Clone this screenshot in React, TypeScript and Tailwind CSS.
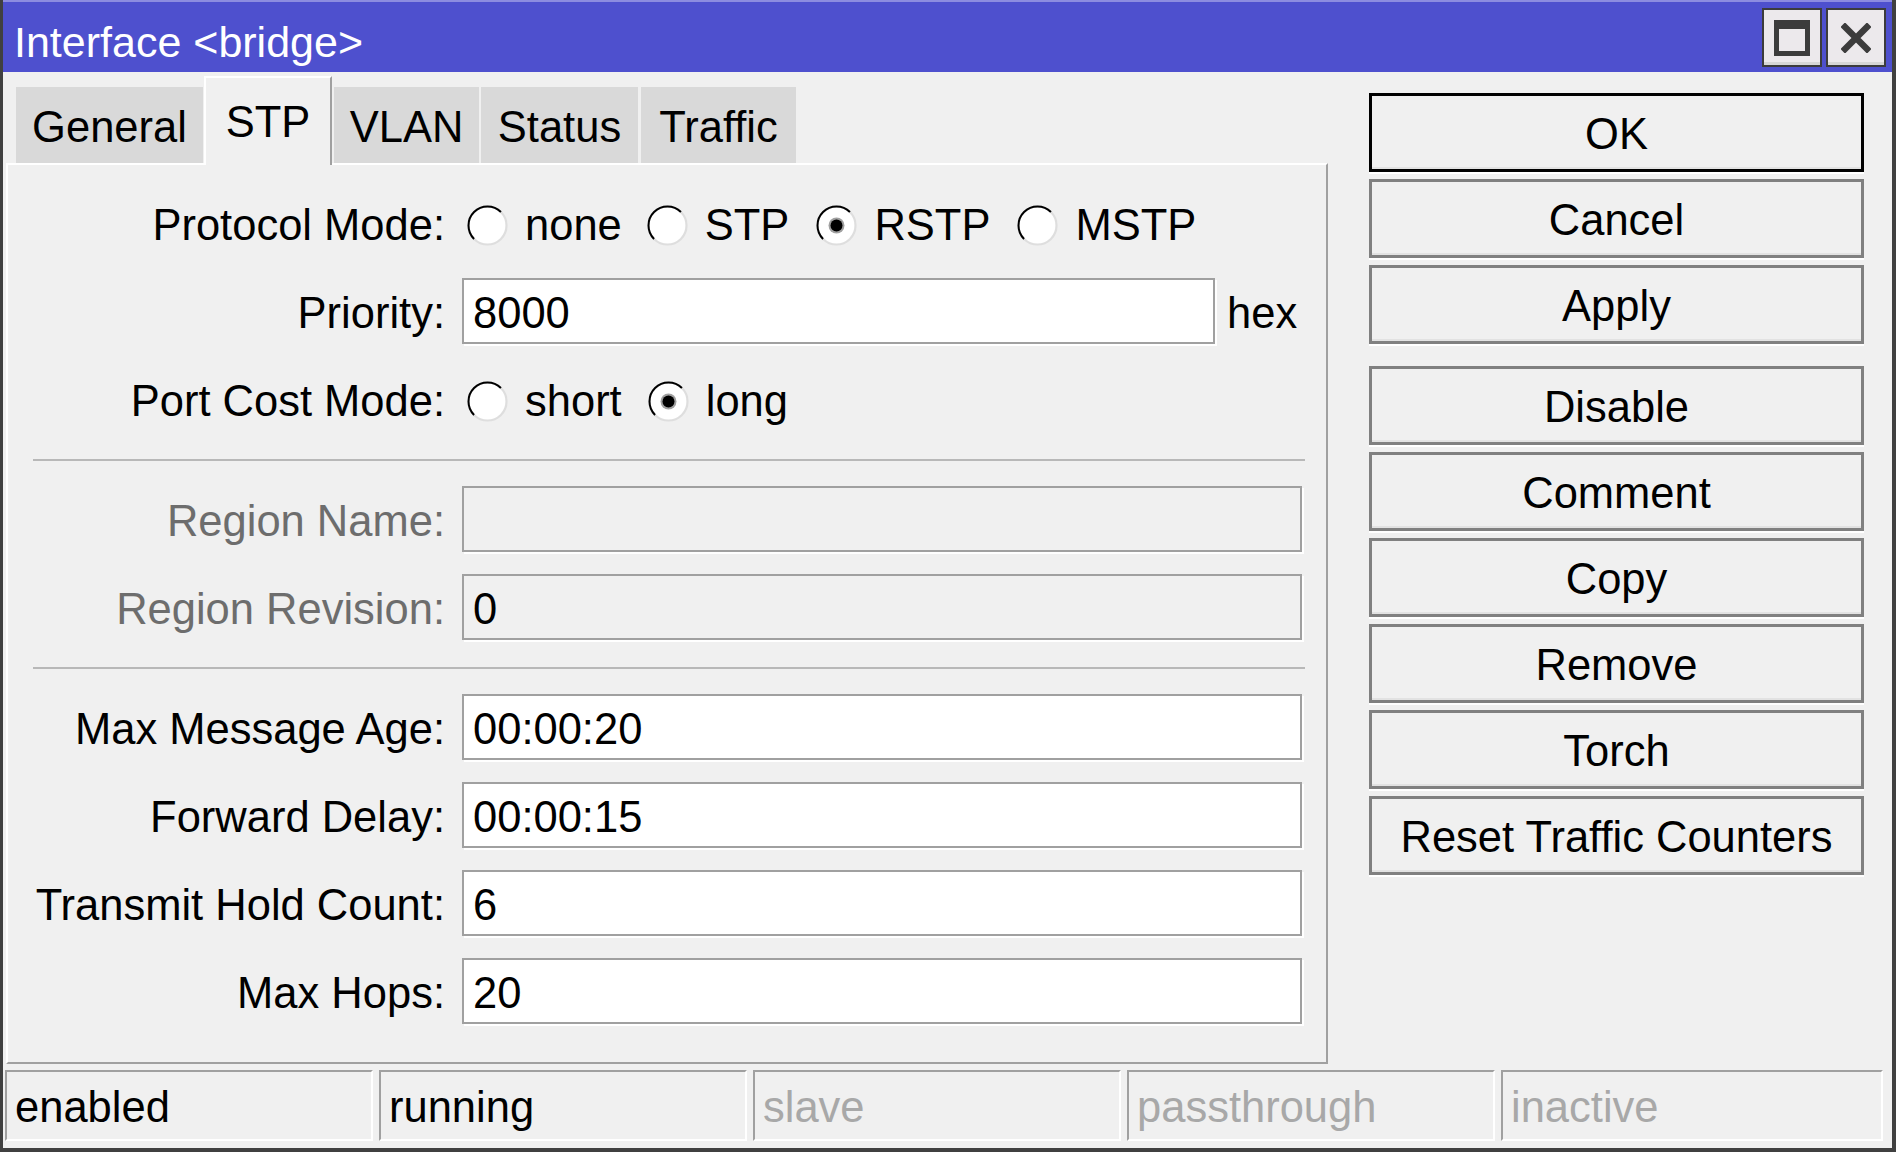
import React from "react";

function Radio({ checked }: { checked?: boolean }) {
  return (
    <svg width="41" height="41" viewBox="0 0 41 41" className="shrink-0">
      <circle cx="20.5" cy="20.5" r="19" fill="#ffffff" stroke="#dedede" strokeWidth="2.2" />
      <path d="M7.06 33.94 A19 19 0 0 1 33.94 7.06" fill="none" stroke="#000000" strokeWidth="2" />
      {checked && (
        <>
          <circle cx="20.5" cy="20.5" r="8" fill="#a0a0a0" />
          <circle cx="20.5" cy="20.5" r="6" fill="#000000" />
        </>
      )}
    </svg>
  );
}

function Option({ label, checked, className }: { label: string; checked?: boolean; className: string }) {
  return (
    <div className={`flex items-center pt-[5px] ${className}`}>
      <Radio checked={checked} />
      <span className="ml-[17px] whitespace-nowrap">{label}</span>
    </div>
  );
}

function Row({
  label,
  muted,
  children,
  className,
}: {
  label: string;
  muted?: boolean;
  children: React.ReactNode;
  className?: string;
}) {
  return (
    <div className={`flex items-center h-[66px] shrink-0 ${className ?? "mb-[22px]"}`}>
      <div className={`w-[437px] pt-[5px] text-right whitespace-nowrap ${muted ? "text-[#6d6d6d]" : "text-black"}`}>
        {label}
      </div>
      <div className="ml-[17px] flex items-center">{children}</div>
    </div>
  );
}

function Field({ value, wide = true, disabled }: { value: string; wide?: boolean; disabled?: boolean }) {
  return (
    <div
      className={`h-[66px] border-2 border-[#a0a0a0] shadow-[2px_2px_0_#ffffff] flex items-center pl-[9px] pt-[5px] whitespace-nowrap ${
        wide ? "w-[840px]" : "w-[753px]"
      } ${disabled ? "bg-[#f0f0f0]" : "bg-white"}`}
    >
      {value}
    </div>
  );
}

function Separator() {
  return <div className="ml-[25px] w-[1272px] h-[2px] bg-[#b8b8b8] mt-[5px] mb-[25px] shrink-0" />;
}

function Btn({ children, primary, className }: { children: React.ReactNode; primary?: boolean; className?: string }) {
  return (
    <div
      className={`h-[79px] shrink-0 border-[3px] flex items-center justify-center pt-[5px] bg-[#f0f0f0] whitespace-nowrap shadow-[0_2px_0_#ffffff,inset_0_-2px_0_#e2e2e2] ${
        primary ? "border-black" : "border-[#808080]"
      } ${className ?? "mb-[7px]"}`}
    >
      {children}
    </div>
  );
}

function Cell({ children, muted, last }: { children: React.ReactNode; muted?: boolean; last?: boolean }) {
  return (
    <div
      className={`h-[71px] border-2 border-t-[#a0a0a0] border-l-[#a0a0a0] border-b-white border-r-white flex items-center pl-[8px] pt-[4px] whitespace-nowrap ${
        last ? "flex-1" : "w-[368px]"
      } ${muted ? "text-[#a8a8a8]" : "text-black"}`}
    >
      {children}
    </div>
  );
}

export default function App() {
  return (
    <div className="w-[1896px] h-[1152px] overflow-hidden bg-[#f0f0f0] flex flex-col border-l-[3px] border-r-[4px] border-b-[4px] border-[#404040] text-[43.5px] leading-none text-black font-['Liberation_Sans',Arial,Helvetica,sans-serif]">
      {/* Title bar */}
      <div className="h-[72px] shrink-0 flex bg-[#4e50ce] border-t-2 border-[#8c8ce0]">
        <div className="flex-1 flex items-center pl-[11px] pt-[10px] text-[43px] text-white whitespace-nowrap">
          Interface &lt;bridge&gt;
        </div>
        <div className="flex gap-[4px] mt-[6px] mr-[6px] self-start">
          <div className="w-[60px] h-[59px] border-2 border-[#3c3c3c] bg-[#ece9ec] shadow-[inset_0_-3px_0_#d6d6d6] flex items-center justify-center">
            <svg width="36" height="36" viewBox="0 0 36 36">
              <rect x="0" y="0" width="36" height="36" fill="#3c3c3c" />
              <rect x="5" y="9" width="26" height="22" fill="#ece9ec" />
            </svg>
          </div>
          <div className="w-[60px] h-[59px] border-2 border-[#3c3c3c] bg-[#ece9ec] shadow-[inset_0_-3px_0_#d6d6d6] flex items-center justify-center">
            <svg width="30" height="30" viewBox="0 0 30 30">
              <path d="M4 4 L26 26 M26 4 L4 26" stroke="#3c3c3c" strokeWidth="6.5" strokeLinecap="square" fill="none" />
            </svg>
          </div>
        </div>
      </div>

      {/* Main */}
      <div className="flex h-[992px] shrink-0">
        <div className="ml-[3px] w-[1322px] flex flex-col shrink-0">
          {/* Tabs */}
          <div className="h-[91px] flex items-end pl-[10px] shrink-0">
            <div className="w-[187px] h-[76px] bg-[#d9d9d9] flex items-center justify-center pt-[5px]">General</div>
            <div className="ml-[1px] w-[128px] h-[89px] -mb-[2px] relative z-10 bg-[#f0f0f0] border-t-2 border-l-2 border-white border-r-2 border-r-[#a0a0a0] flex items-center justify-center pt-[2px]">
              STP
            </div>
            <div className="ml-[2px] w-[145px] h-[76px] bg-[#d9d9d9] flex items-center justify-center pt-[5px]">VLAN</div>
            <div className="ml-[2px] w-[157px] h-[76px] bg-[#d9d9d9] flex items-center justify-center pt-[5px]">Status</div>
            <div className="ml-[3px] w-[155px] h-[76px] bg-[#d9d9d9] flex items-center justify-center pt-[5px]">Traffic</div>
          </div>

          {/* Panel */}
          <div className="h-[901px] border-2 border-t-white border-l-white border-r-[#a0a0a0] border-b-[#a0a0a0] pt-[25px] flex flex-col">
            <Row label="Protocol Mode:">
              <Option label="none" className="ml-[5px]" />
              <Option label="STP" className="ml-[25px]" />
              <Option label="RSTP" checked className="ml-[27px]" />
              <Option label="MSTP" className="ml-[27px]" />
            </Row>
            <Row label="Priority:">
              <Field value="8000" wide={false} />
              <span className="ml-[12px] pt-[5px]">hex</span>
            </Row>
            <Row label="Port Cost Mode:" className="mb-[22px]">
              <Option label="short" className="ml-[5px]" />
              <Option label="long" checked className="ml-[26px]" />
            </Row>
            <Separator />
            <Row label="Region Name:" muted>
              <Field value="" disabled />
            </Row>
            <Row label="Region Revision:" muted>
              <Field value="0" disabled />
            </Row>
            <Separator />
            <Row label="Max Message Age:">
              <Field value="00:00:20" />
            </Row>
            <Row label="Forward Delay:">
              <Field value="00:00:15" />
            </Row>
            <Row label="Transmit Hold Count:">
              <Field value="6" />
            </Row>
            <Row label="Max Hops:">
              <Field value="20" />
            </Row>
          </div>
        </div>

        {/* Buttons */}
        <div className="ml-[41px] w-[495px] pt-[21px] flex flex-col shrink-0">
          <Btn primary>OK</Btn>
          <Btn>Cancel</Btn>
          <Btn className="mb-[22px]">Apply</Btn>
          <Btn>Disable</Btn>
          <Btn>Comment</Btn>
          <Btn>Copy</Btn>
          <Btn>Remove</Btn>
          <Btn>Torch</Btn>
          <Btn>Reset Traffic Counters</Btn>
        </div>
      </div>

      {/* Status bar */}
      <div className="mt-[6px] h-[71px] flex gap-[6px] ml-[2px] mr-[9px] shrink-0">
        <Cell>enabled</Cell>
        <Cell>running</Cell>
        <Cell muted>slave</Cell>
        <Cell muted>passthrough</Cell>
        <Cell muted last>
          inactive
        </Cell>
      </div>
    </div>
  );
}
